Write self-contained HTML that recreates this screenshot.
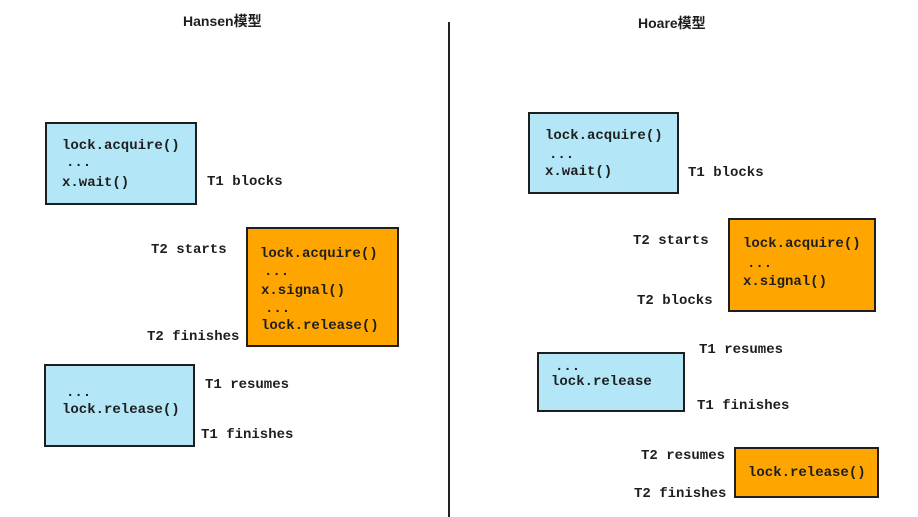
<!DOCTYPE html>
<html><head><meta charset="utf-8"><style>
body{margin:0;width:918px;height:517px;background:#fff;position:relative;overflow:hidden;font-family:"Liberation Mono","Noto Sans CJK SC",monospace;font-weight:bold;font-size:14px;color:#1e1e1e}
.b{position:absolute;border:2px solid #1e1e1e;box-sizing:border-box}
.bl{background:#b3e6f6}.or{background:#ffa500}
.t{position:absolute;white-space:nowrap;line-height:16px;margin-top:-7px}
.h{font-family:"Liberation Sans","Noto Sans CJK SC",sans-serif;font-size:14px}
</style></head><body>
<div class="t h" style="left:183px;top:20px">Hansen模型</div>
<div class="t h" style="left:638px;top:22px">Hoare模型</div>
<div style="position:absolute;left:448px;top:22px;width:2px;height:495px;background:#222"></div>

<div class="b bl" style="left:45px;top:122px;width:152px;height:83px"></div>
<div class="t" style="left:62px;top:145px">lock.acquire()</div>
<div class="t" style="left:66px;top:162px">...</div>
<div class="t" style="left:62px;top:182px">x.wait()</div>
<div class="t" style="left:207px;top:181px">T1 blocks</div>

<div class="b or" style="left:246px;top:227px;width:153px;height:120px"></div>
<div class="t" style="left:260px;top:253px">lock.acquire()</div>
<div class="t" style="left:264px;top:271px">...</div>
<div class="t" style="left:261px;top:290px">x.signal()</div>
<div class="t" style="left:265px;top:308px">...</div>
<div class="t" style="left:261px;top:325px">lock.release()</div>
<div class="t" style="left:151px;top:249px">T2 starts</div>
<div class="t" style="left:147px;top:336px">T2 finishes</div>

<div class="b bl" style="left:44px;top:364px;width:151px;height:83px"></div>
<div class="t" style="left:66px;top:392px">...</div>
<div class="t" style="left:62px;top:409px">lock.release()</div>
<div class="t" style="left:205px;top:384px">T1 resumes</div>
<div class="t" style="left:201px;top:434px">T1 finishes</div>

<div class="b bl" style="left:528px;top:112px;width:151px;height:82px"></div>
<div class="t" style="left:545px;top:135px">lock.acquire()</div>
<div class="t" style="left:549px;top:154px">...</div>
<div class="t" style="left:545px;top:171px">x.wait()</div>
<div class="t" style="left:688px;top:172px">T1 blocks</div>

<div class="b or" style="left:728px;top:218px;width:148px;height:94px"></div>
<div class="t" style="left:743px;top:243px">lock.acquire()</div>
<div class="t" style="left:747px;top:263px">...</div>
<div class="t" style="left:743px;top:281px">x.signal()</div>
<div class="t" style="left:633px;top:240px">T2 starts</div>
<div class="t" style="left:637px;top:300px">T2 blocks</div>

<div class="b bl" style="left:537px;top:352px;width:148px;height:60px"></div>
<div class="t" style="left:555px;top:366px">...</div>
<div class="t" style="left:551px;top:381px">lock.release</div>
<div class="t" style="left:699px;top:349px">T1 resumes</div>
<div class="t" style="left:697px;top:405px">T1 finishes</div>

<div class="b or" style="left:734px;top:447px;width:145px;height:51px"></div>
<div class="t" style="left:748px;top:472px">lock.release()</div>
<div class="t" style="left:641px;top:455px">T2 resumes</div>
<div class="t" style="left:634px;top:493px">T2 finishes</div>
</body></html>
